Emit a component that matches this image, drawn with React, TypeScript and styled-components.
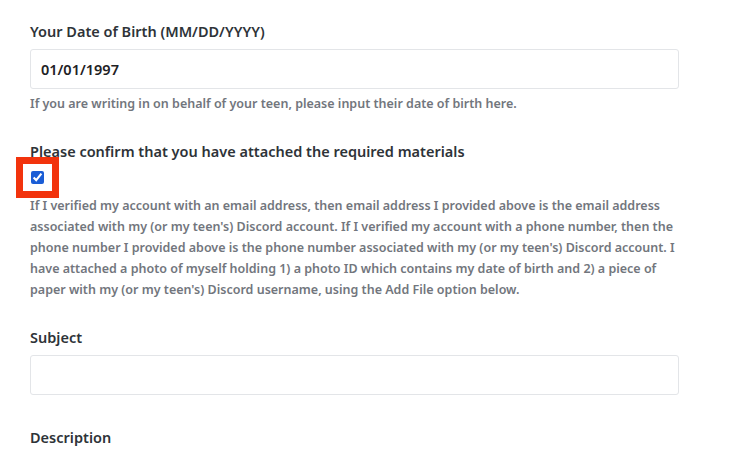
import styled, { createGlobalStyle } from 'styled-components'

const Global = createGlobalStyle`
  html, body { margin: 0; padding: 0; background: #fff; }
  body { font-family: "Noto Sans", "Open Sans", sans-serif; }
  * { box-sizing: border-box; }
`

const helpText =
  "If I verified my account with an email address, then email address I provided above is the email address associated with my (or my teen's) Discord account. If I verified my account with a phone number, then the phone number I provided above is the phone number associated with my (or my teen's) Discord account. I have attached a photo of myself holding 1) a photo ID which contains my date of birth and 2) a piece of paper with my (or my teen's) Discord username, using the Add File option below."

export default function App() {
  return (
    <>
      <Global />
      <Form>
        <Field>
          <Label>Your Date of Birth (MM/DD/YYYY)</Label>
          <Input defaultValue="01/01/1997" />
          <Hint>If you are writing in on behalf of your teen, please input their date of birth here.</Hint>
        </Field>

        <Field>
          <Label>Please confirm that you have attached the required materials</Label>
          <Highlight>
            <Check type="checkbox" defaultChecked />
          </Highlight>
          <Hint $lh={21} $top={-3}>{helpText}</Hint>
        </Field>

        <Field>
          <Label>Subject</Label>
          <Input />
        </Field>

        <Field>
          <Label>Description</Label>
        </Field>
      </Form>
    </>
  )
}

const Form = styled.div`
  padding: 21px 0 0 30px;
  width: 680px;
  display: flex;
  flex-direction: column;
  gap: 32px;
`
const Field = styled.div`
  display: flex;
  flex-direction: column;
  align-items: flex-start;
`
const Label = styled.label`
  font-size: 14.5px;
  font-weight: 600;
  color: #2e3338;
  line-height: 20px;
  margin-bottom: 8px;
`
const Input = styled.input`
  width: 649px;
  height: 40px;
  border: 1px solid #e3e5e8;
  border-radius: 3px;
  padding: 0 10px;
  font-family: "Noto Sans", "Open Sans", sans-serif;
  font-size: 14.5px;
  font-weight: 600;
  color: #1e2124;
  outline: none;
`
const Hint = styled.p<{ $lh?: number; $top?: number }>`
  margin: ${({ $top }) => $top ?? 5}px 0 -5px;
  font-size: 12.5px;
  font-weight: 600;
  line-height: ${({ $lh }) => $lh ?? 20}px;
  color: #72767d;
  max-width: 649px;
`
const Highlight = styled.div`
  margin: -12px 0 0 -14px;
  border: 7px solid #f2330d;
  padding: 7px 8px;
  display: inline-flex;
`
const Check = styled.input`
  margin: 0;
  width: 13px;
  height: 13px;
  accent-color: #1a5dd6;
`
